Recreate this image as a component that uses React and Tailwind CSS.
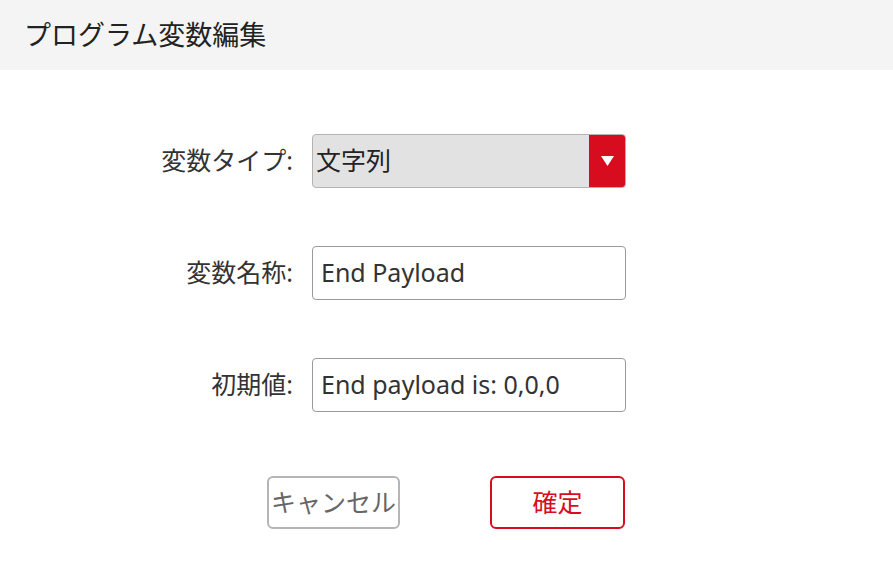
import React from 'react';

const font = { fontFamily: '"Noto Sans", "Noto Sans CJK JP", sans-serif' };

function Field({ label, children }) {
  return (
    <>
      <label className="flex items-center justify-end text-[25px] text-[#333]">{label}</label>
      {children}
    </>
  );
}

export default function App() {
  return (
    <div style={font} className="h-[580px] w-[893px] bg-white">
      <div className="flex h-[70px] items-center bg-[#f4f4f4] pl-[24px] text-[27px] text-[#222]">
        プログラム変数編集
      </div>

      <div className="mt-[64px] grid grid-cols-[293px_314px] gap-x-[19px] gap-y-[58px]">
        <Field label="変数タイプ:">
          <div className="flex h-[54px] overflow-hidden rounded-[4px] border border-[#b3b3b3] bg-[#e2e2e2]">
            <span className="flex flex-1 items-center pl-[3px] text-[25px] text-[#222]">文字列</span>
            <span className="flex w-[36px] items-center justify-center bg-[#d80c1f]">
              <svg width="13" height="10" viewBox="0 0 13 10">
                <path d="M0 0h13L6.5 10z" fill="#fff" />
              </svg>
            </span>
          </div>
        </Field>

        <Field label="変数名称:">
          <div className="flex h-[54px] items-center rounded-[4px] border border-[#9a9a9a] pl-[8px] text-[25px] text-[#333]">
            End Payload
          </div>
        </Field>

        <Field label="初期値:">
          <div className="flex h-[54px] items-center rounded-[4px] border border-[#9a9a9a] pl-[8px] text-[25px] text-[#333]">
            End payload is: 0,0,0
          </div>
        </Field>
      </div>

      <div className="mt-[64px] flex gap-[90px] pl-[267px]">
        <button className="flex h-[53px] w-[133px] items-center justify-center rounded-[6px] border-2 border-[#b5b5b5] text-[25px] text-[#666]">
          キャンセル
        </button>
        <button className="flex h-[53px] w-[135px] items-center justify-center rounded-[6px] border-2 border-[#d80c1f] text-[25px] text-[#d80c1f]">
          確定
        </button>
      </div>
    </div>
  );
}
